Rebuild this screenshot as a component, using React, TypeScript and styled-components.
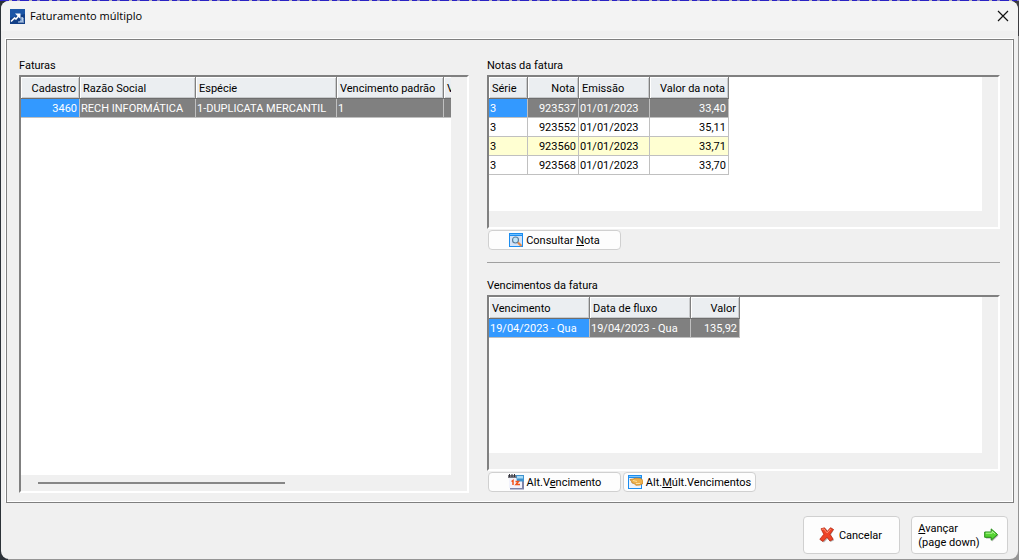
import React from "react";
import styled, { createGlobalStyle, css } from "styled-components";

const uiFont = `Tahoma, Roboto, "DejaVu Sans Condensed", sans-serif`;

const GlobalStyle = createGlobalStyle`
  * { box-sizing: border-box; }
  html, body { margin: 0; padding: 0; }
  body {
    background: #8f8f8f;
    color: #000;
    font-family: ${uiFont};
    font-size: 11px;
    line-height: 14px;
  }
`;

const Desktop = styled.div`
  min-height: 100vh;
  display: flex;
  padding: 1px;
  background:
    repeating-linear-gradient(90deg, #2a22c4 0 9px, #b9b4b4 9px 12px, #2a22c4 12px 17px, #8d86c8 17px 20px) top / 100% 1px no-repeat,
    linear-gradient(#3c3c40, #3c3c40) right top / 8px 36px no-repeat,
    linear-gradient(90deg, #2c3238 0 8px, #949494 8px);
`;

const Window = styled.main`
  flex: 1;
  min-width: 0;
  display: flex;
  flex-direction: column;
  background: #f0f0f0;
  border-radius: 8px;
  overflow: hidden;
`;

const TitleBar = styled.header`
  display: flex;
  align-items: center;
  height: 30px;
  padding: 0 9px;
  background: #f3f3f3;
`;

const Title = styled.h1`
  flex: 1;
  margin: 0 0 0 5px;
  font: 400 11px/16px "Segoe UI", "Open Sans", "Noto Sans", sans-serif;
`;

const CloseButton = styled.button`
  display: flex;
  padding: 0;
  border: 0;
  background: none;
`;

const Panel = styled.section`
  flex: 1;
  display: grid;
  grid-template-columns: 450fr 513fr;
  column-gap: 18px;
  margin: 8px 4px 0 5px;
  padding: 19px 13px 9px 12px;
  border: 1px solid #7f7f7f;
  box-shadow: -1px -1px 0 #fff, inset -1px -1px 0 #fff;
`;

const Column = styled.div`
  min-width: 0;
  display: flex;
  flex-direction: column;
`;

const Label = styled.h2`
  margin: 0 0 2px;
  font: inherit;
`;

const GridFrame = styled.div<{ $grow?: boolean; $height?: number }>`
  ${(p) => p.$grow && css`flex: 1;`}
  min-height: ${(p) => p.$height ?? 0}px;
  display: flex;
  flex-direction: column;
  border: 2px solid;
  border-color: #808080 #fff #fff #808080;
`;

const Viewport = styled.div`
  flex: 1;
  margin-right: 16px;
  background: #fff;
  overflow: hidden;
`;

const ScrollTrack = styled.div`
  height: 16px;
  padding: 7px 17px;
`;

const ScrollThumb = styled.div`
  width: 60%;
  height: 2px;
  background: #868686;
`;

const Table = styled.table`
  table-layout: fixed;
  border-collapse: separate;
  border-spacing: 0;
`;

const HeadCell = styled.th<{ $right?: boolean }>`
  height: 22px;
  padding: 2px 3px 0;
  overflow: hidden;
  white-space: nowrap;
  font-weight: 400;
  text-align: ${(p) => (p.$right ? "right" : "left")};
  background: #ebeef1;
  border-right: 1px solid #808080;
  border-bottom: 1px solid #6e6e6e;
  box-shadow: inset 1px 1px 0 #fff, inset -1px -1px 0 #c8cacc;
`;

type Tone = "active" | "selected" | "alternate" | "plain";

const tones: Record<Tone, [string, string]> = {
  active: ["#3399ff", "#fff"],
  selected: ["#808080", "#fff"],
  alternate: ["#ffffd2", "#000"],
  plain: ["#fff", "#000"],
};

const Cell = styled.td<{ $right?: boolean; $tone: Tone }>`
  height: 19px;
  padding: 2px 2px 0 1px;
  overflow: hidden;
  white-space: nowrap;
  text-align: ${(p) => (p.$right ? "right" : "left")};
  color: ${(p) => tones[p.$tone][1]};
  background: ${(p) => tones[p.$tone][0]};
  border-right: 1px solid #c0c0c0;
  border-bottom: 1px solid #c0c0c0;
`;

const Divider = styled.hr`
  width: 100%;
  margin: 11px 0 16px;
  border: 0;
  border-top: 1px solid #a0a0a0;
`;

const ButtonRow = styled.div`
  display: flex;
  gap: 2px;
  padding: 1px;
`;

const buttonFace = css`
  display: flex;
  align-items: center;
  justify-content: center;
  border: 1px solid #d0d0d0;
  border-radius: 4px;
  background: #fdfdfd;
  color: #000;
  font: inherit;
`;

const SmallButton = styled.button`
  ${buttonFace}
  width: 133px;
  height: 20px;
  padding: 0;
  gap: 3px;

  span { padding-top: 1px; }
`;

const Footer = styled.footer`
  display: flex;
  justify-content: flex-end;
  gap: 11px;
  padding: 13px 10px 5px;
`;

const LargeButton = styled.button`
  ${buttonFace}
  width: 97px;
  height: 38px;
  padding: 0 2px 0 0;
  gap: 4px;
  text-align: left;

  span { padding-top: 1px; }
`;

type GridColumn = { title: string; width: number; right?: boolean };

function DataGrid({ label, columns, rows }: { label: string; columns: GridColumn[]; rows: string[][] }) {
  const total = columns.reduce((sum, c) => sum + c.width, 0);
  const tone = (row: number, col: number): Tone =>
    row === 0 ? (col === 0 ? "active" : "selected") : row % 2 === 0 ? "alternate" : "plain";
  return (
    <Table aria-label={label} style={{ width: total }}>
      <colgroup>
        {columns.map((c, i) => (
          <col key={i} style={{ width: c.width }} />
        ))}
      </colgroup>
      <thead>
        <tr>
          {columns.map((c, i) => (
            <HeadCell key={i} scope="col" $right={c.right}>{c.title}</HeadCell>
          ))}
        </tr>
      </thead>
      <tbody>
        {rows.map((row, r) => (
          <tr key={r}>
            {row.map((value, i) => (
              <Cell key={i} $right={columns[i].right} $tone={tone(r, i)}>{value}</Cell>
            ))}
          </tr>
        ))}
      </tbody>
    </Table>
  );
}

const AppIcon = () => (
  <svg width="15" height="15" viewBox="0 0 15 15" aria-hidden="true">
    <rect width="15" height="15" fill="#123f86" />
    <path d="M0 0h15v5L0 9z" fill="#1c56a6" />
    <path d="M9.500 13l2-5 2.500 1-1 4z" fill="#7fa3d3" />
    <path d="M8 13h6M12 8l1 4" stroke="#c9d9ee" strokeWidth="1" />
    <path d="M1 12.500L4.500 9l1.500 1L9.500 6" fill="none" stroke="#fff" strokeWidth="1.600" />
    <path d="M5 4.500H10.500V10z" fill="#fff" />
  </svg>
);

const CloseIcon = () => (
  <svg width="12" height="12" viewBox="0 0 12 12" aria-hidden="true">
    <path d="M1 1l10 10M11 1L1 11" stroke="#111" strokeWidth="1.200" />
  </svg>
);

const SearchWindowIcon = () => (
  <svg width="14" height="14" viewBox="0 0 14 14" aria-hidden="true">
    <rect x=".5" y=".5" width="13" height="13" fill="#d3e2f6" stroke="#1b8df0" />
    <path d="M0 0h14v3H0z" fill="#1b8df0" />
    <path d="M1 1h12v1H1z" fill="#6fc0ff" />
    <circle cx="6.500" cy="7" r="3" fill="#bfe6fb" stroke="#5f7f9c" strokeWidth="1.200" />
    <path d="M9 9.500l3.500 3.500" stroke="#e28a4a" strokeWidth="2.200" />
  </svg>
);

const CalendarIcon = () => (
  <svg width="16" height="16" viewBox="0 0 16 16" aria-hidden="true">
    <path d="M2 3h14v12.500H2z" fill="#7d82a8" />
    <path d="M1 3h13v11H1z" fill="#f1f2fc" />
    <path d="M0 1h9v3H0z" fill="#77777f" />
    <path d="M1.500 0v3M4 0v3M6.500 0v3" stroke="#33333a" strokeWidth="1" />
    <path d="M8 1h8v6.500H9z" fill="#3f93cf" />
    <path d="M9 2h6v2.500H9z" fill="#a9dcf7" />
    <path d="M3.500 7.500L5 6.500V11M7.500 7.500h3L8 10.500h4" fill="none" stroke="#f2541b" strokeWidth="1.500" />
  </svg>
);

const HandWindowIcon = () => (
  <svg width="15" height="14" viewBox="0 0 15 14" aria-hidden="true">
    <rect x=".5" y=".5" width="13" height="13" fill="#eef3fb" stroke="#1b8df0" />
    <path d="M0 0h14v3H0z" fill="#1b8df0" />
    <path d="M1 1h12v1H1z" fill="#7cc6ff" />
    <path d="M2 4.500l3-.5 3-1 5 .5 2 2v3l-3 1.500-4 .3-2-1.800-2-.5-.5-1.500z" fill="#eeb04c" stroke="#b9771d" strokeWidth=".7" />
    <path d="M5 5.500l4 1M8 8.500h4" stroke="#fbe0a0" strokeWidth="1" />
  </svg>
);

const CancelIcon = () => (
  <svg width="16" height="16" viewBox="0 0 16 16" aria-hidden="true">
    <path d="M3.500 2.500L7 1.500l2 3.500 3-4 3 1.500L12 8l3 5.500-3.500 1.500L9 11.500 5 15.500l-3.500-2L5.500 8z" fill="#8c8c8c" opacity=".6" />
    <path d="M2 1.800L5.500.8l2.700 3.600L11.500.7l3 1.800-3.500 4.800 3.200 5-3.300 1.700-2.900-3.800-4 4.300L.8 12.300l4-5z" fill="#ee4426" stroke="#b92a12" strokeWidth=".8" />
    <path d="M2.800 2.400l2-.5 3.300 4L11.700 2" fill="none" stroke="#ff9478" strokeWidth="1" />
  </svg>
);

const ForwardIcon = () => (
  <svg width="15" height="14" viewBox="0 0 15 14" aria-hidden="true">
    <path d="M2 5h6V2l6.500 5.500L8 13.500V10.500H2z" fill="#777" opacity=".6" />
    <path d="M.7 4h6.500V.9L13.500 6.500 7.200 12.200V9.300H.7z" fill="#55d432" stroke="#238c16" strokeWidth="1" />
    <path d="M1.700 5.200h6.500V3.300l3 2.700" fill="none" stroke="#b5f59c" strokeWidth="1" />
  </svg>
);

const invoiceColumns: GridColumn[] = [
  { title: "Cadastro", width: 59, right: true },
  { title: "Razão Social", width: 116 },
  { title: "Espécie", width: 141 },
  { title: "Vencimento padrão", width: 107 },
  { title: "V", width: 60 },
];

const noteColumns: GridColumn[] = [
  { title: "Série", width: 39 },
  { title: "Nota", width: 51, right: true },
  { title: "Emissão", width: 71 },
  { title: "Valor da nota", width: 79, right: true },
];

const dueColumns: GridColumn[] = [
  { title: "Vencimento", width: 101 },
  { title: "Data de fluxo", width: 101 },
  { title: "Valor", width: 49, right: true },
];

export default function App() {
  return (
    <>
      <GlobalStyle />
      <Desktop>
        <Window>
          <TitleBar>
            <AppIcon />
            <Title>Faturamento múltiplo</Title>
            <CloseButton type="button" aria-label="Fechar"><CloseIcon /></CloseButton>
          </TitleBar>

          <Panel>
            <Column>
              <Label>Faturas</Label>
              <GridFrame $grow>
                <Viewport>
                  <DataGrid
                    label="Faturas"
                    columns={invoiceColumns}
                    rows={[["3460", "RECH INFORMÁTICA", "1-DUPLICATA MERCANTIL", "1", ""]]}
                  />
                </Viewport>
                <ScrollTrack><ScrollThumb /></ScrollTrack>
              </GridFrame>
            </Column>

            <Column>
              <Label>Notas da fatura</Label>
              <GridFrame $height={154}>
                <Viewport>
                  <DataGrid
                    label="Notas da fatura"
                    columns={noteColumns}
                    rows={[
                      ["3", "923537", "01/01/2023", "33,40"],
                      ["3", "923552", "01/01/2023", "35,11"],
                      ["3", "923560", "01/01/2023", "33,71"],
                      ["3", "923568", "01/01/2023", "33,70"],
                    ]}
                  />
                </Viewport>
                <ScrollTrack />
              </GridFrame>
              <ButtonRow>
                <SmallButton type="button">
                  <SearchWindowIcon />
                  <span>Consultar <u>N</u>ota</span>
                </SmallButton>
              </ButtonRow>
              <Divider />
              <Label>Vencimentos da fatura</Label>
              <GridFrame $grow>
                <Viewport>
                  <DataGrid
                    label="Vencimentos da fatura"
                    columns={dueColumns}
                    rows={[["19/04/2023 - Qua", "19/04/2023 - Qua", "135,92"]]}
                  />
                </Viewport>
                <ScrollTrack />
              </GridFrame>
              <ButtonRow>
                <SmallButton type="button">
                  <CalendarIcon />
                  <span>Alt.V<u>e</u>ncimento</span>
                </SmallButton>
                <SmallButton type="button">
                  <HandWindowIcon />
                  <span>Alt.<u>M</u>últ.Vencimentos</span>
                </SmallButton>
              </ButtonRow>
            </Column>
          </Panel>

          <Footer>
            <LargeButton type="button">
              <CancelIcon />
              <span>Cancelar</span>
            </LargeButton>
            <LargeButton type="button">
              <span><u>A</u>vançar<br />(page down)</span>
              <ForwardIcon />
            </LargeButton>
          </Footer>
        </Window>
      </Desktop>
    </>
  );
}
